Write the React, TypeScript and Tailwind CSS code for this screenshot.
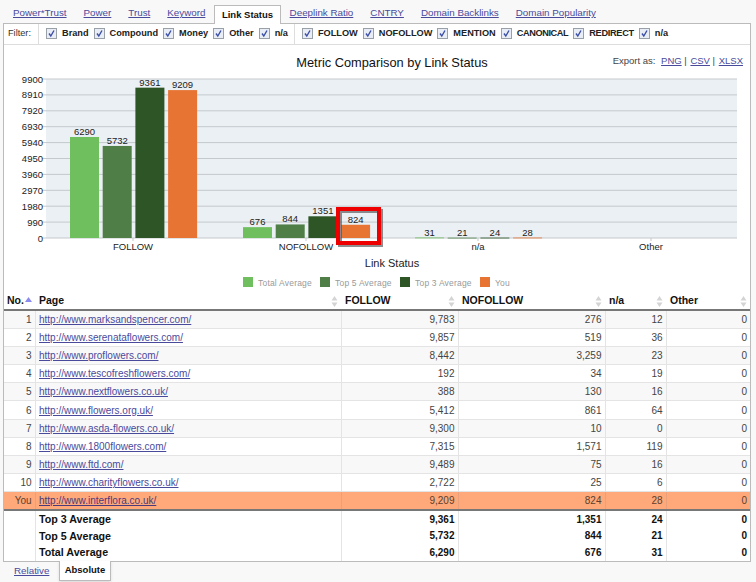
const tabs = ['Power*Trust', 'Power', 'Trust', 'Keyword', 'Link Status', 'Deeplink Ratio', 'CNTRY', 'Domain Backlinks', 'Domain Popularity']
const filterA = ['Brand', 'Compound', 'Money', 'Other', 'n/a']
const filterB = ['FOLLOW', 'NOFOLLOW', 'MENTION', 'CANONICAL', 'REDIRECT', 'n/a']

const rows = [
  ['1', 'http://www.marksandspencer.com/', '9,783', '276', '12', '0'],
  ['2', 'http://www.serenataflowers.com/', '9,857', '519', '36', '0'],
  ['3', 'http://www.proflowers.com/', '8,442', '3,259', '23', '0'],
  ['4', 'http://www.tescofreshflowers.com/', '192', '34', '19', '0'],
  ['5', 'http://www.nextflowers.co.uk/', '388', '130', '16', '0'],
  ['6', 'http://www.flowers.org.uk/', '5,412', '861', '64', '0'],
  ['7', 'http://www.asda-flowers.co.uk/', '9,300', '10', '0', '0'],
  ['8', 'http://www.1800flowers.com/', '7,315', '1,571', '119', '0'],
  ['9', 'http://www.ftd.com/', '9,489', '75', '16', '0'],
  ['10', 'http://www.charityflowers.co.uk/', '2,722', '25', '6', '0'],
]

const summary = [
  ['Top 3 Average', '9,361', '1,351', '24', '0'],
  ['Top 5 Average', '5,732', '844', '21', '0'],
  ['Total Average', '6,290', '676', '31', '0'],
]

const COLORS = ['#6fbf5f', '#4f7f47', '#2d5526', '#e87433']
const TICKS = [0, 990, 1980, 2970, 3960, 4950, 5940, 6930, 7920, 8910, 9900]
const GROUPS = [
  { label: 'FOLLOW', x: 129, bars: [6290, 5732, 9361, 9209] },
  { label: 'NOFOLLOW', x: 302, bars: [676, 844, 1351, 824] },
  { label: 'n/a', x: 474, bars: [31, 21, 24, 28] },
  { label: 'Other', x: 647, bars: [] as number[] },
]
const LEGEND = ['Total Average', 'Top 5 Average', 'Top 3 Average', 'You']

const yFor = (v: number) => 238 - (v / 9900) * 159

function Check() {
  return (
    <span className="flex h-[11px] w-[11px] items-center justify-center border border-[#9aa0a8] bg-[#e9edf5]">
      <svg width="9" height="9" viewBox="0 0 9 9">
        <path d="M2 4.5 L3.8 7 L7 1.5" fill="none" stroke="#3c4fa8" strokeWidth="1.4" />
      </svg>
    </span>
  )
}

function Filter({ label }: { label: string }) {
  return (
    <span className="flex items-center gap-[5px]">
      <Check />
      <span className={`font-bold ${label === 'CANONICAL' ? 'tracking-[-0.4px]' : label === 'REDIRECT' ? 'tracking-[-0.3px]' : ''}`}>{label}</span>
    </span>
  )
}

function SortIcon({ active }: { active?: boolean }) {
  if (active) {
    return (
      <svg width="7" height="6" viewBox="0 0 7 6" className="mb-[3px] ml-[1px] inline-block">
        <path d="M3.5 0 L7 5 L0 5 Z" fill="#8a8af0" />
      </svg>
    )
  }
  return (
    <svg width="7" height="11" viewBox="0 0 7 11" className="absolute top-[3px] right-[3px]">
      <path d="M3.5 0 L6.5 4.5 L0.5 4.5 Z M3.5 11 L6.5 6.5 L0.5 6.5 Z" fill="#d4d4d4" />
    </svg>
  )
}

function Chart() {
  return (
    <svg width="746" height="248" viewBox="0 45 746 248" className="block" fontFamily="'Liberation Sans', Arial, sans-serif">
      <text x="388" y="67" fontSize="12.8" fill="#111" textAnchor="middle">Metric Comparison by Link Status</text>
      <rect x="42" y="79" width="691" height="159" fill="#ebf0f5" />
      {TICKS.map((t) => (
        <g key={t}>
          <line x1="38" x2="733" y1={yFor(t)} y2={yFor(t)} stroke="#c4c9cc" strokeWidth="1" />
          <text x="39" y={yFor(t) + 3.5} fontSize="9.5" fill="#222" textAnchor="end">{t}</text>
        </g>
      ))}
      {GROUPS.map((g) => (
        <g key={g.label}>
          <line x1={g.x} x2={g.x} y1="238" y2="241" stroke="#c4c9cc" />
          <text x={g.x} y="250" fontSize="9.5" fill="#222" textAnchor="middle">{g.label}</text>
          {g.bars.map((v, i) => (
            <g key={i}>
              <rect x={g.x - 63 + i * 32.7} y={yFor(v)} width="29" height={Math.max(238 - yFor(v), 0.8)} fill={COLORS[i]} />
              <text x={g.x - 48.5 + i * 32.7} y={yFor(v) - 2} fontSize="9.5" fill="#222" textAnchor="middle">{v}</text>
            </g>
          ))}
        </g>
      ))}
      <text x="388" y="267" fontSize="11" fill="#222" textAnchor="middle">Link Status</text>
      {LEGEND.map((l, i) => {
        const x = [239, 316, 396, 476][i]
        return (
          <g key={l}>
            <rect x={x} y="277" width="10" height="10" fill={COLORS[i]} />
            <text x={x + 15} y="285.5" fontSize="8.5" fill="#999" letterSpacing="0.2">{l}</text>
          </g>
        )
      })}
      {/* annotation box around the You bar */}
      <rect x="336" y="211" width="41" height="34" fill="none" stroke="#444" strokeWidth="4" opacity="0.6" />
      <rect x="334" y="209" width="41" height="34" fill="none" stroke="#ee0000" strokeWidth="4" />
    </svg>
  )
}

export default function App() {
  return (
    <div className="h-[582px] w-[756px] overflow-hidden bg-[#f8f8f8] font-['Liberation_Sans',Arial,sans-serif] text-[9.8px] text-[#222]">
      {/* Tabs */}
      <div className="flex h-[23px] items-end pl-[4.5px]">
        {tabs.map((t) =>
          t === 'Link Status' ? (
            <div key={t} className="relative z-10 -mb-px flex h-[19px] items-center border border-b-0 border-[#bbb] bg-white px-[7px] text-[9.5px] font-bold text-[#111]">
              {t}
            </div>
          ) : (
            <a key={t} className="flex h-[19px] items-center px-[8.5px] text-[#4a4a9c] underline">
              {t}
            </a>
          ),
        )}
      </div>

      {/* Panel */}
      <div className="ml-[3px] w-[748px] border border-[#bbb] bg-white">
        <div className="flex h-[21px] items-center border-b border-[#ddd] text-[9.2px]">
          <div className="flex h-full w-[35px] items-center border-r border-[#ddd] pl-[4px] text-[#333]">Filter:</div>
          <div className="flex h-full items-center gap-[5px] border-r border-[#ddd] pl-[7px] pr-[6px]">
            {filterA.map((f) => <Filter key={f} label={f} />)}
          </div>
          <div className="flex h-full items-center gap-[5px] pl-[7px]">
            {filterB.map((f) => <Filter key={f} label={f} />)}
          </div>
        </div>

        <div className="relative">
          <div className="absolute top-[9px] right-[7px] text-[9.5px] text-[#444]">
            Export as: <a className="ml-[3px] text-[#4a4a9c] underline">PNG</a> | <a className="ml-[1px] text-[#4a4a9c] underline">CSV</a> | <a className="ml-[1px] text-[#4a4a9c] underline">XLSX</a>
          </div>
          <Chart />
        </div>

        <table className="w-full table-fixed border-collapse text-[10px]">
          <colgroup>
            <col className="w-[31px]" />
            <col className="w-[306px]" />
            <col className="w-[117px]" />
            <col className="w-[147px]" />
            <col className="w-[61px]" />
            <col />
          </colgroup>
          <thead>
            <tr className="h-[17px] border-b-2 border-[#777] text-left text-[10.5px] font-bold text-[#111]">
              <th className="pl-[3px]">No.<SortIcon active /></th>
              <th className="relative pl-[4px]">Page<SortIcon /></th>
              <th className="relative pl-[4px]">FOLLOW<SortIcon /></th>
              <th className="relative pl-[4px]">NOFOLLOW<SortIcon /></th>
              <th className="relative pl-[4px]">n/a<SortIcon /></th>
              <th className="relative pl-[4px]">Other<SortIcon /></th>
            </tr>
          </thead>
          <tbody>
            {rows.map((r, i) => (
              <tr key={r[0]} className={`h-[18.2px] border-b border-[#e4e4e4] text-[#444] ${i % 2 === 0 ? 'bg-[#f8f8f8]' : 'bg-white'}`}>
                <td className="border-r border-[#e4e4e4] pr-[3px] text-right">{r[0]}</td>
                <td className="border-r border-[#e4e4e4] pl-[3.5px]"><a className="text-[#4a4a9c] underline">{r[1]}</a></td>
                <td className="border-r border-[#e4e4e4] pr-[3px] text-right">{r[2]}</td>
                <td className="border-r border-[#e4e4e4] pr-[3px] text-right">{r[3]}</td>
                <td className="border-r border-[#e4e4e4] pr-[3px] text-right">{r[4]}</td>
                <td className="pr-[3px] text-right">{r[5]}</td>
              </tr>
            ))}
            <tr className="h-[18px] border-b-2 border-[#777] bg-[#ffa97a] text-[#5a4030]">
              <td className="border-r border-[#eba07a] pr-[3px] text-right">You</td>
              <td className="border-r border-[#eba07a] pl-[3.5px]"><a className="text-[#4a3a7c] underline">http://www.interflora.co.uk/</a></td>
              <td className="border-r border-[#eba07a] pr-[3px] text-right">9,209</td>
              <td className="border-r border-[#eba07a] pr-[3px] text-right">824</td>
              <td className="border-r border-[#eba07a] pr-[3px] text-right">28</td>
              <td className="pr-[3px] text-right">0</td>
            </tr>
            {summary.map((s, i) => (
              <tr key={s[0]} className={`${i === 0 ? 'h-[17.6px]' : 'h-[16.6px]'} font-bold text-[#111]`}>
                <td className="border-r border-[#e4e4e4]" />
                <td className="border-r border-[#e4e4e4] pl-[3.5px] text-[10.7px]">{s[0]}</td>
                <td className="border-r border-[#e4e4e4] pr-[3px] text-right">{s[1]}</td>
                <td className="border-r border-[#e4e4e4] pr-[3px] text-right">{s[2]}</td>
                <td className="border-r border-[#e4e4e4] pr-[3px] text-right">{s[3]}</td>
                <td className="pr-[3px] text-right">{s[4]}</td>
              </tr>
            ))}
          </tbody>
        </table>
      </div>

      {/* Bottom tabs */}
      <div className="flex pl-[4px]">
        <a className="flex h-[19px] w-[55px] items-center pl-[10px] text-[#4a4a9c] underline">Relative</a>
        <div className="relative z-10 -mt-px flex h-[20px] w-[52px] items-center justify-center border border-t-0 border-[#bbb] bg-white text-[9.5px] font-bold text-[#111] shadow-sm">Absolute</div>
      </div>
    </div>
  )
}
